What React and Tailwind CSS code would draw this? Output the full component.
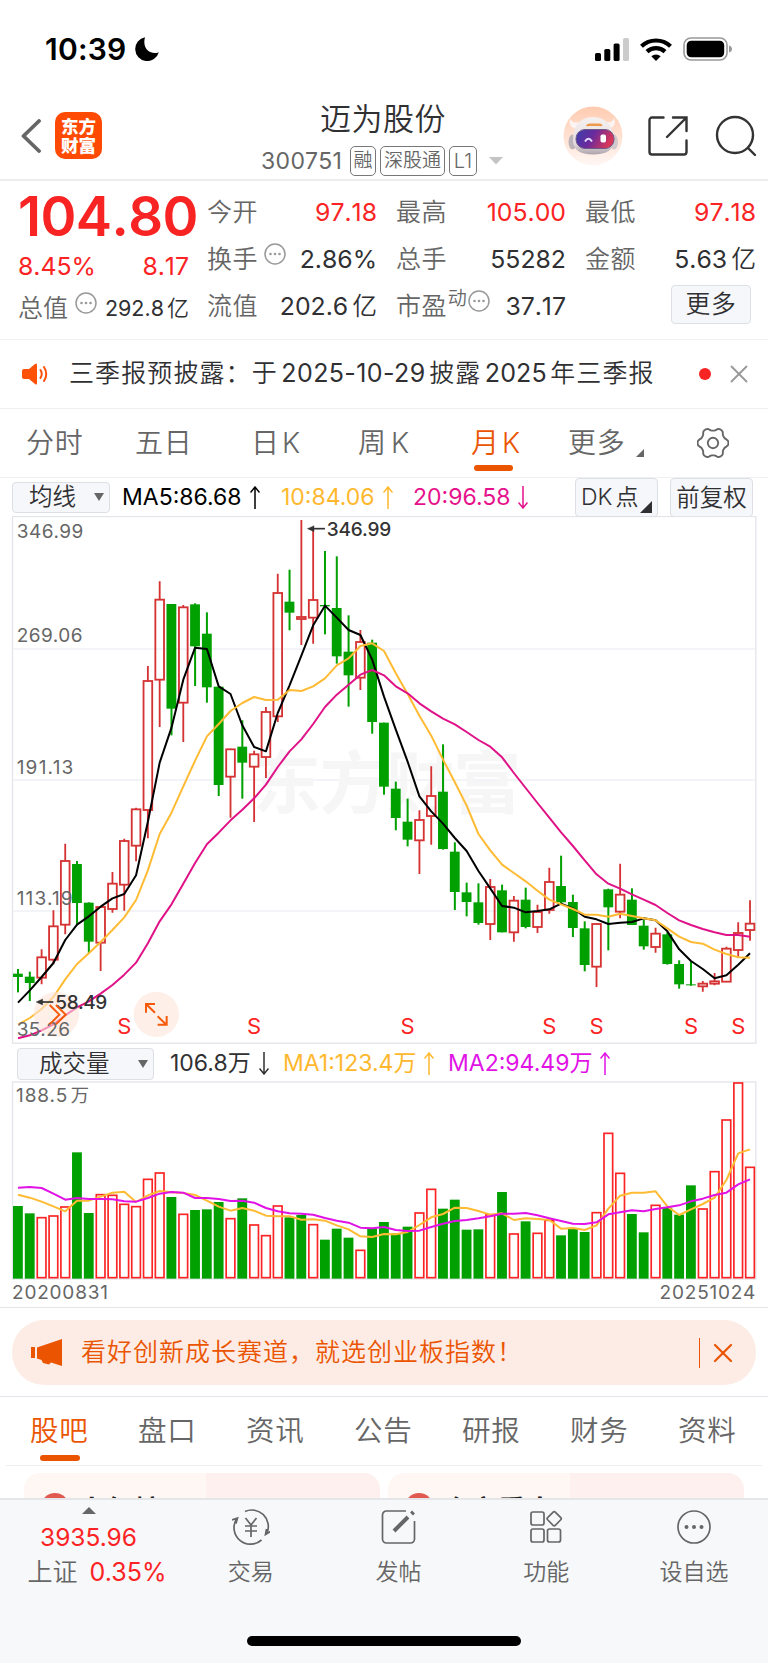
import React from 'react';
import { X } from 'lucide-react';

const STEP = 35.42;
const px = (i) => 54 + i * STEP;
const py = (y) => Math.round(y * 1.0332);

// [high, body top, body bottom, low, rising]
const CANDLES = [
  [1332, 1345, 1355, 1400, 0], [1340, 1354, 1372, 1425, 0], [1275, 1298, 1357, 1376, 1],
  [1161, 1208, 1305, 1318, 1], [968, 1018, 1203, 1231, 1], [1018, 1027, 1140, 1205, 0],
  [1138, 1139, 1252, 1286, 0], [1150, 1152, 1255, 1338, 1], [1050, 1084, 1158, 1168, 1],
  [953, 960, 1087, 1162, 1], [863, 868, 974, 1019, 1], [452, 496, 870, 952, 1],
  [206, 259, 492, 629, 1], [272, 272, 576, 653, 0], [275, 282, 558, 673, 1],
  [270, 273, 395, 510, 0], [296, 358, 514, 558, 0], [512, 512, 798, 829, 0],
  [692, 694, 773, 892, 1], [610, 686, 733, 837, 0], [698, 708, 744, 905, 1],
  [571, 586, 716, 777, 1], [184, 240, 598, 615, 1], [172, 265, 297, 348, 0],
  [28, 310, 316, 391, 1], [50, 260, 312, 387, 1], [118, 275, 279, 360, 0],
  [134, 284, 424, 445, 0], [305, 410, 479, 570, 0], [347, 382, 486, 522, 1],
  [376, 384, 615, 648, 0], [617, 617, 802, 826, 0], [788, 808, 893, 929, 0],
  [837, 904, 956, 976, 0], [871, 899, 958, 1056, 1], [743, 829, 888, 971, 1],
  [679, 817, 983, 985, 0], [964, 991, 1108, 1160, 0], [1081, 1109, 1137, 1179, 0],
  [1083, 1138, 1198, 1203, 0], [1070, 1094, 1201, 1248, 1], [1087, 1103, 1225, 1225, 0],
  [1120, 1133, 1225, 1252, 1], [1096, 1130, 1210, 1214, 0], [1145, 1166, 1210, 1227, 1],
  [1038, 1079, 1160, 1171, 1], [1003, 1091, 1138, 1141, 0], [1116, 1137, 1213, 1239, 0],
  [1193, 1214, 1320, 1339, 0], [1199, 1201, 1325, 1384, 1], [1099, 1100, 1153, 1278, 0],
  [1026, 1116, 1165, 1185, 1], [1098, 1130, 1204, 1204, 0], [1189, 1206, 1266, 1276, 0],
  [1212, 1229, 1268, 1284, 1], [1225, 1231, 1317, 1319, 0], [1307, 1317, 1376, 1389, 0],
  [1310, 1376, 1379, 1380, 0], [1367, 1374, 1382, 1398, 1], [1343, 1368, 1374, 1379, 1],
  [1267, 1273, 1369, 1370, 1], [1196, 1227, 1277, 1296, 1], [1132, 1200, 1219, 1250, 1]
];

const MA5 = [
  1430, 1394, 1355, 1314, 1248, 1203, 1179, 1151, 1127, 1114, 1060, 904, 733, 631, 492, 399, 403, 511, 533, 624, 687,
  700, 588, 508, 422, 334, 277, 312, 347, 362, 434, 541, 637, 730, 830, 874, 910, 951, 989, 1047, 1098, 1149,
  1154, 1167, 1163, 1159, 1142, 1156, 1180, 1188, 1201, 1197, 1195, 1185, 1190, 1222, 1275, 1309, 1332, 1359, 1350, 1319, 1286
];
const MA10 = [
  1493, 1474, 1448, 1413, 1362, 1317, 1286, 1253, 1219, 1182, 1131, 1045, 940, 878, 801, 727, 656, 620, 583, 559, 542,
  551, 550, 522, 525, 511, 488, 450, 430, 394, 386, 408, 473, 533, 596, 654, 724, 790, 858, 940, 987, 1029,
  1053, 1077, 1104, 1130, 1144, 1158, 1174, 1174, 1180, 1171, 1178, 1185, 1190, 1214, 1238, 1253, 1258, 1276, 1288, 1298, 1299
];
const MA20 = [
  1533, 1524, 1510, 1492, 1466, 1443, 1426, 1403, 1378, 1348, 1313, 1257, 1193, 1144, 1084, 1024, 970, 936, 900, 869, 836,
  797, 745, 700, 665, 620, 571, 535, 506, 477, 464, 479, 511, 531, 560, 584, 605, 621, 644, 667, 686, 717,
  763, 806, 850, 892, 935, 975, 1016, 1057, 1084, 1099, 1115, 1130, 1146, 1169, 1190, 1204, 1216, 1225, 1233, 1233, 1238
];

const SELL_MARKS = [9, 20, 33, 45, 49, 57, 61];

// top edge of each volume bar
const VOLUMES = [
  498, 520, 532, 527, 500, 337, 519, 463, 465, 492, 499, 417, 398, 471, 522, 510, 508, 486, 535, 475, 554,
  586, 497, 532, 525, 553, 599, 566, 593, 630, 565, 546, 580, 560, 518, 447, 506, 479, 569, 568, 523, 456,
  581, 544, 579, 540, 586, 567, 576, 517, 279, 399, 522, 577, 495, 503, 524, 436, 506, 394, 239, 128, 381
];
const VOL_MA1 = [
  464, 473, 485, 499, 514, 482, 482, 470, 458, 455, 486, 466, 453, 457, 459, 465, 482, 500, 512, 504, 512,
  527, 529, 529, 539, 538, 542, 556, 568, 589, 591, 582, 583, 576, 555, 532, 522, 503, 504, 513, 524, 520,
  540, 535, 537, 540, 566, 564, 570, 556, 506, 467, 458, 458, 454, 499, 525, 508, 492, 473, 420, 340, 328
];
const VOL_MA2 = [
  443, 441, 444, 461, 479, 474, 477, 477, 478, 484, 485, 474, 461, 456, 458, 474, 474, 477, 483, 482, 488,
  504, 514, 520, 521, 524, 534, 542, 548, 563, 565, 561, 570, 573, 572, 561, 551, 543, 540, 535, 529, 521,
  521, 519, 526, 535, 543, 551, 552, 547, 523, 517, 511, 514, 507, 502, 496, 484, 476, 465, 458, 433, 418
];

const RED_VOLUMES = new Set([
  2, 3, 4, 7, 8, 9, 10, 11, 12, 14, 18, 20, 21, 22, 25, 29, 34, 35, 40, 42, 44, 45, 49, 50, 51, 54, 58, 59, 60, 61, 62
]);

// six-lobed gear outline around (16, 16)
const GEAR = Array.from({ length: 72 }, (_, k) => {
  const a = (k * Math.PI) / 36;
  const c = Math.cos(6 * a);
  const r = 13.9 + 1.5 * c * (1.5 - 0.5 * c * c);
  return `${(16 + r * Math.cos(a)).toFixed(2)},${(16 + r * Math.sin(a)).toFixed(2)}`;
}).join(' ');

function Line({ data, color }) {
  return (
    <polyline
      points={data.map((y, i) => `${px(i)},${y}`).join(' ')}
      fill="none"
      stroke={color}
      strokeWidth="6"
      strokeLinejoin="round"
    />
  );
}

function StatusBar() {
  return (
    <div className="flex h-[98px] items-center justify-between pl-[45px] pr-9">
      <div className="flex items-center">
        <span className="w-[90px] text-[30px] font-semibold tracking-[0.2px] text-black">10:39</span>
        <svg width="24" height="24" viewBox="0 0 24 24">
          <path d="M10 .3A12 12 0 1 0 23.8 15.2C17 18.3 6.500 13 10 .3Z" fill="#000" />
        </svg>
      </div>
      <div className="flex items-center gap-[11px]">
        <svg width="34" height="23" viewBox="0 0 34 23">
          <rect x="0" y="15" width="6" height="8" rx="1.600" />
          <rect x="9.300" y="11" width="6" height="12" rx="1.600" />
          <rect x="18.600" y="5.500" width="6" height="17.500" rx="1.600" />
          <rect x="28" y="0" width="6" height="23" rx="1.600" fill="#ccc" />
        </svg>
        <svg width="32" height="23" viewBox="0 0 32 23" fill="none" stroke="#000" strokeWidth="4.200">
          <path d="M1.500 8.300a21 21 0 0 1 29 0" />
          <path d="M7 13.600a13.300 13.300 0 0 1 18 0" />
          <path d="M11.300 18.300a7 7 0 0 1 9.400 0L16 23Z" fill="#000" stroke="none" />
        </svg>
        <svg width="49" height="24" viewBox="0 0 49 24">
          <rect x="1" y="1" width="43" height="22" rx="7" fill="none" stroke="#999" strokeWidth="1.600" />
          <rect x="3.700" y="3.700" width="37.500" height="16.600" rx="4.500" />
          <path d="M46 8.500q3 1 3 3.500t-3 3.500Z" fill="#999" />
        </svg>
      </div>
    </div>
  );
}

function Robot() {
  return (
    <svg width="60" height="60" viewBox="0 0 60 60">
      <defs>
        <linearGradient id="halo" x1="0" y1="0" x2="0" y2="1">
          <stop offset="0" stopColor="#ffcbb0" />
          <stop offset="1" stopColor="#fff7f4" />
        </linearGradient>
        <linearGradient id="visor" x1="0" y1="0" x2="1" y2="0.3">
          <stop offset="0" stopColor="#3b3fae" />
          <stop offset="0.5" stopColor="#6a2a9c" />
          <stop offset="1" stopColor="#d8375a" />
        </linearGradient>
        <linearGradient id="shell" x1="0" y1="0" x2="0" y2="1">
          <stop offset="0" stopColor="#f6f1f1" />
          <stop offset="0.7" stopColor="#e4dcdf" />
          <stop offset="1" stopColor="#aea5ac" />
        </linearGradient>
      </defs>
      <circle cx="30" cy="30" r="29.500" fill="url(#halo)" />
      <path d="M12 23Q5 20 7 13Q10 18 18 16ZM46 23Q54 20 51 12Q49 18 41 16Z" fill="#fbf4f2" />
      <ellipse cx="9.500" cy="36" rx="4" ry="7.500" fill="#bdb4ba" />
      <ellipse cx="51" cy="36" rx="4" ry="7.500" fill="#d2c9cd" />
      <path d="M10 34Q10 12 30 11Q50 12 51 34Q51 48.500 30 48.500Q10 48.500 10 34Z" fill="url(#shell)" />
      <rect x="13" y="23.500" width="38" height="19" rx="9" fill="url(#visor)" stroke="#6e5a86" strokeWidth="1" />
      <path d="M23 19.500q1-2 4-2h9q3 0 3.500 1.500t-4 1H27q-4 .8-4-.5Z" fill="#ee9a4d" />
      <path d="M22 35.500q3.500-5.500 7 0" fill="none" stroke="#e6dcff" strokeWidth="2" />
      <rect x="37.500" y="28.500" width="5.500" height="8" rx="1.800" fill="#fff" />
    </svg>
  );
}

function Header() {
  return (
    <div className="flex h-[83px] items-center border-b-2 border-[#ececee] pb-[6px] pl-[21px]">
      <svg width="20" height="34" viewBox="0 0 20 34" className="shrink-0">
        <path d="M18 2 2.500 17 18 32" fill="none" stroke="#666" strokeWidth="3.800" strokeLinecap="round" strokeLinejoin="round" />
      </svg>
      <div className="ml-[14px] flex h-[47px] w-[47px] shrink-0 flex-col items-center justify-center rounded-[10px] bg-[#ff4a04] text-[17.500px] font-black leading-[19px] text-white">
        <span>东方</span>
        <span>财富</span>
      </div>
      <div className="ml-[159px] flex w-[245px] shrink-0 flex-col">
        <div className="pl-[59px] text-[31px] leading-[50px] tracking-[0.5px] text-[#303033]">迈为股份</div>
        <div className="flex items-center text-[#666]">
          <span className="w-[89px] text-[23px] font-normal leading-[34px] tracking-[0.4px]">300751</span>
          <span className="h-[30px] w-[26px] rounded-[5px] border border-[#777] text-center text-[19px] leading-[28px]">融</span>
          <span className="ml-1 h-[30px] w-[65px] rounded-[5px] border border-[#777] text-center text-[19px] leading-[28px]">深股通</span>
          <span className="ml-1 h-[30px] w-[28px] rounded-[5px] border border-[#777] text-center text-[20px] leading-[28px]">L1</span>
          <svg width="14" height="8" viewBox="0 0 14 8" className="ml-3 shrink-0">
            <path d="M0 0h14L7 7.500Z" fill="#c4c4c4" />
          </svg>
        </div>
      </div>
      <div className="ml-[57px] flex items-center">
        <Robot />
        <svg width="40" height="40" viewBox="0 0 40 40" className="ml-[25px]" fill="none" stroke="#333" strokeWidth="2.400" strokeLinecap="round">
          <path d="M15.500 1.500H4A2.500 2.500 0 0 0 1.500 4v32A2.500 2.500 0 0 0 4 38.500h32a2.500 2.500 0 0 0 2.500-2.500V24.500" />
          <path d="M25 1.500h13.500V15M38 2 19 21" />
        </svg>
        <svg width="42" height="42" viewBox="0 0 42 42" className="ml-[27px]" fill="none" stroke="#333" strokeWidth="2.400" strokeLinecap="round">
          <circle cx="20" cy="20" r="18" />
          <path d="m33 33 7 7" />
        </svg>
      </div>
    </div>
  );
}

function Dots({ className }) {
  return (
    <svg width="22" height="22" viewBox="0 0 22 22" className={className}>
      <circle cx="11" cy="11" r="10" fill="none" stroke="#999" strokeWidth="1.500" />
      <circle cx="6.500" cy="11" r="1.300" fill="#999" />
      <circle cx="11" cy="11" r="1.300" fill="#999" />
      <circle cx="15.500" cy="11" r="1.300" fill="#999" />
    </svg>
  );
}

function Cell({ label, value, unit, mark, red }) {
  return (
    <div className="flex h-[47px] items-center whitespace-nowrap">
      <span className="text-[25px] tracking-[0.4px] text-[#666]">{label}</span>
      {mark}
      <span className={red ? 'ml-auto font-normal text-[#fb2323]' : 'ml-auto font-normal'}>{value}</span>
      {unit && <span className="ml-[4px]">{unit}</span>}
    </div>
  );
}

function Quote() {
  return (
    <div className="flex h-[159px] border-b border-[#f0f0f2] pl-[18px] pr-[12px] text-[24.800px] text-[#303033] [font-kerning:none]">
      <div className="w-[189px] shrink-0">
        <div className="h-[63px] pt-[3px] text-[54.500px] font-semibold leading-[64px] tracking-[-0.6px] text-[#f82323]">104.80</div>
        <div className="flex h-[40px] items-center justify-between pr-[18px] pt-[6px] font-normal text-[#fb2323]">
          <span>8.45%</span>
          <span>8.17</span>
        </div>
        <div className="flex h-[44px] items-center pt-[5px]">
          <span className="text-[25px] text-[#666]">总值</span>
          <Dots className="mb-[12px] ml-[7px]" />
          <span className="ml-auto text-[21.500px] font-normal">292.8</span>
          <span className="ml-[3px] pr-[18px] text-[22px]">亿</span>
        </div>
      </div>
      <div className="flex w-[170px] shrink-0 flex-col pt-[8px]">
        <Cell label="今开" value="97.18" red />
        <Cell label="换手" value="2.86%" mark={<Dots className="mb-[12px] ml-[6px]" />} />
        <Cell label="流值" value="202.6" unit="亿" />
      </div>
      <div className="ml-[19px] flex w-[170px] shrink-0 flex-col pt-[8px]">
        <Cell label="最高" value="105.00" red />
        <Cell label="总手" value="55282" />
        <Cell
          label="市盈"
          value="37.17"
          mark={
            <>
              <span className="mb-[14px] ml-[1px] text-[19px] text-[#666]">动</span>
              <Dots className="mb-[12px] ml-[1px]" />
            </>
          }
        />
      </div>
      <div className="ml-[19px] flex grow flex-col pt-[8px]">
        <Cell label="最低" value="97.18" red />
        <Cell label="金额" value="5.63" unit="亿" />
        <div className="ml-auto mr-[5px] mt-[2px] flex h-[39px] w-[80px] items-center justify-center rounded border border-[#dcdfe4] bg-[#f6f7fa] tracking-[0.8px]">更多</div>
      </div>
    </div>
  );
}

function Notice() {
  return (
    <div className="flex h-[69px] items-center border-b border-[#f0f0f2] pl-[22px] pr-5 text-[#303033]">
      <svg width="26" height="22" viewBox="0 0 26 22">
        <path d="M0 8q0-2 2-2h5l6-5q2-1.500 2 1v18q0 2.500-2 1l-6-5H2q-2 0-2-2Z" fill="#ff5209" />
        <path d="M18.500 7q2.500 4 0 8M22 4q4.500 7 0 14" fill="none" stroke="#ff5209" strokeWidth="2" strokeLinecap="round" />
      </svg>
      <span className="ml-[21px] whitespace-nowrap text-[25px] tracking-[1.1px]">
        三季报预披露：于<span className="mx-[3.500px] font-normal tracking-[0.4px]">2025-10-29</span>披露
        <span className="mx-[3.500px] font-normal tracking-[0.1px]">2025</span>年三季报
      </span>
      <span className="ml-auto h-3 w-3 rounded-full bg-[#f82323]" />
      <X className="-mr-[6px] ml-[13px] text-[#999]" size={30} strokeWidth={1.5} />
    </div>
  );
}

function Periods() {
  return (
    <div className="flex h-[69px] items-center border-b border-[#f0f0f2] pl-[26px] text-[28px] text-[#666]">
      <span className="w-[109px] tracking-[0.8px]">分时</span>
      <span className="w-[116px] tracking-[0.8px]">五日</span>
      <span className="flex w-[107px] gap-[3px]">日<span>K</span></span>
      <span className="flex w-[113px] gap-[5px]">周<span>K</span></span>
      <span className="relative flex w-[97px] gap-[3px] text-[#eb5502]">
        月<span>K</span>
        <i className="absolute -bottom-[7px] left-[3px] h-[6px] w-[39px] rounded-full bg-[#eb5502]" />
      </span>
      <span className="w-[68px] tracking-[0.8px]">更多</span>
      <svg width="8" height="8" viewBox="0 0 8 8" className="mt-5">
        <path d="M8 0v8H0Z" fill="#666" />
      </svg>
      <svg width="32" height="32" viewBox="0 0 32 32" className="ml-[53px]" fill="none" stroke="#666" strokeWidth="1.900" strokeLinejoin="round">
        <polygon points={GEAR} />
        <circle cx="16" cy="16" r="5.200" />
      </svg>
    </div>
  );
}

function Arrow({ down }) {
  return (
    <svg width="10" height="23" viewBox="0 0 10 23" className={down ? 'rotate-180' : ''} fill="none" stroke="currentColor" strokeWidth="1.500">
      <path d="M5 23V1M.5 6.500 5 1l4.500 5.500" />
    </svg>
  );
}

function Select({ className, children }) {
  return (
    <div className={`flex items-center rounded border border-[#dcdfe4] bg-[#f6f7fa] text-[23.500px] font-[350] text-[#303033] ${className}`}>
      {children}
      <svg width="10" height="8" viewBox="0 0 10 8" className="ml-auto">
        <path d="M0 0h10L5 8Z" fill="#666" />
      </svg>
    </div>
  );
}

function PriceChart() {
  return (
    <>
      <div className="flex h-[38px] items-center pl-3 pr-[15px] text-[23px] font-normal">
        <Select className="h-[31px] w-[98px] pl-[16px] pr-[5px]">均线</Select>
        <span className="ml-[12px] flex w-[159px] items-center gap-2 text-black">
          <span>MA5:86.68</span>
          <Arrow />
        </span>
        <span className="flex w-[132px] items-center gap-2 text-[#ffb82e]">
          <span>10:84.06</span>
          <Arrow />
        </span>
        <span className="flex items-center gap-2 text-[#e6128c]">
          <span>20:96.58</span>
          <Arrow down />
        </span>
        <div className="relative ml-auto h-[39px] w-[83px] rounded border border-[#dcdfe4] bg-[#f6f7fa] pl-[5px] font-[350] leading-[37px] text-[#303033]">
          DK<span className="ml-[3px]">点</span>
          <svg width="12" height="12" viewBox="0 0 12 12" className="absolute bottom-[3px] right-[5px]">
            <path d="M12 0v12H0Z" fill="#303033" />
          </svg>
        </div>
        <div className="ml-3 h-[39px] w-[83px] rounded border border-[#dcdfe4] bg-[#f6f7fa] text-center text-[23.500px] font-[350] leading-[37px] text-[#303033]">前复权</div>
      </div>
      <svg width="768" height="528" viewBox="0 17 2304 1584" className="block font-normal">
        <rect x="37.500" y="18.500" width="2230" height="1580" fill="none" stroke="#e3e5ea" strokeWidth="4" />
        {[403, 783, 1163].map((y) => (
          <path key={y} d={`M38 ${py(y)}H2266`} stroke="#eef0f5" strokeWidth="5" />
        ))}
        <text x="758" y={py(863)} fontSize="205" fontWeight="700" fill="#f6f6f7" textLength="806">东方财富</text>
        {CANDLES.map(([h, t, b, l, rising], i) => {
          const x = px(i);
          const [high, top, bottom, low] = [h, t, b, l].map(py);
          return rising ? (
            <g key={i} fill="none" stroke="#d53333" strokeWidth="5.500">
              <path d={`M${x} ${high}V${top}M${x} ${bottom}V${low}`} />
              <rect x={x - 13} y={top} width="26" height={bottom - top} />
            </g>
          ) : (
            <g key={i} fill="#00a000">
              <rect x={x - 3} y={high} width="6" height={low - high} />
              <rect x={x - 15} y={top} width="29.500" height={bottom - top} />
            </g>
          );
        })}
        <Line data={MA5.map(py)} color="#000" />
        <Line data={MA10.map(py)} color="#ffbb33" />
        <Line data={MA20.map(py)} color="#e01288" />
        <g fill="#fde5d9" fillOpacity="0.6">
          <circle cx="169" cy="1512" r="68" />
          <circle cx="469" cy="1512" r="68" />
        </g>
        <g fill="#666" fontSize="57">
          <text x="50" y="83" textLength="200">346.99</text>
          <text x="50" y="396" textLength="198">269.06</text>
          <text x="50" y="790" textLength="170">191.13</text>
          <text x="50" y="1185" textLength="168">113.19</text>
          <text x="50" y="1578" textLength="160">35.26</text>
        </g>
        <g fill="#333" stroke="#333" fontSize="57" fontWeight="500">
          <path d="M940 55H975" strokeWidth="5" />
          <path d="M922 55l20-9v18Z" strokeWidth="1" />
          <text x="980" y="77" textLength="194" strokeWidth="0">346.99</text>
          <path d="M125 1475H160" strokeWidth="5" />
          <path d="M108 1475l20-9v18Z" strokeWidth="1" />
          <text x="166" y="1497" textLength="156" strokeWidth="0">58.49</text>
        </g>
        <g transform="translate(0 49)" fill="none" stroke="#f55a0a" strokeWidth="6">
          <path d="M149 1435l29 29-29 29M168 1435l29 29-29 29" />
          <path d="M465 1458l-26-25M438 1458v-26h27M473 1469l26 25M473 1494h27v-26" />
        </g>
        <g fill="#fb2323" fontSize="66" textAnchor="middle">
          {SELL_MARKS.map((i) => (
            <text key={i} x={px(i)} y="1572">S</text>
          ))}
        </g>
      </svg>
    </>
  );
}

function VolumeChart() {
  return (
    <>
      <div className="flex h-[37px] items-center pl-[17px] pt-[2px] text-[23px] font-normal">
        <Select className="h-[32px] w-[137px] pl-[21px] pr-[5px]">成交量</Select>
        <span className="ml-[16px] flex w-[113px] items-center gap-2 text-[#303033]">
          <span>106.8万</span>
          <Arrow down />
        </span>
        <span className="flex w-[165px] items-center gap-2 text-[#ffb82e]">
          <span>MA1:123.4万</span>
          <Arrow />
        </span>
        <span className="flex items-center gap-2 text-[#e012e6]">
          <span>MA2:94.49万</span>
          <Arrow />
        </span>
      </div>
      <svg width="768" height="199" viewBox="0 123 2304 597" className="block font-normal">
        <rect x="37.500" y="126" width="2230" height="591" fill="none" stroke="#e3e5ea" strokeWidth="4" />
        <text x="48" y="185" fontSize="57" fill="#666" textLength="154">188.5</text>
        <text x="212" y="185" fontSize="55" fill="#666">万</text>
        {VOLUMES.map((y, i) =>
          RED_VOLUMES.has(i) ? (
            <rect key={i} x={px(i) - 13} y={y + 1} width="26" height={712 - y} fill="#fff" stroke="#fb2323" strokeWidth="5" />
          ) : (
            <rect key={i} x={px(i) - 15} y={y} width="29.500" height={716 - y} fill="#00a000" />
          )
        )}
        <Line data={VOL_MA1} color="#ffbb33" />
        <Line data={VOL_MA2} color="#e012e6" />
      </svg>
      <div className="flex h-[28px] justify-between border-b border-[#e6e6ea] px-3 text-[19px] font-normal leading-[26px] tracking-[0.8px] text-[#666]">
        <span>20200831</span>
        <span>20251024</span>
      </div>
    </>
  );
}

function Banner() {
  return (
    <div className="border-b border-[#e4e6eb] px-3 pb-[11px] pt-3">
      <div className="flex h-[65px] items-center rounded-[32px] bg-[#fcece5] pl-[19px] pr-[21px] text-[#eb5502]">
        <svg width="31" height="27" viewBox="0 0 31 27" fill="currentColor">
          <path d="M0 8h4v11H0ZM6 8.500 31 0v27l-11-3.500-2 2-6-1.500-1.500-3L6 19.500Z" />
        </svg>
        <span className="ml-[19px] text-[25px] tracking-[1px]">看好创新成长赛道，就选创业板指数！</span>
        <span className="ml-auto h-[30px] w-[1.500px] bg-current" />
        <X className="-mr-[4px] ml-[7px]" size={32} strokeWidth={1.6} />
      </div>
    </div>
  );
}

const SECTIONS = ['股吧', '盘口', '资讯', '公告', '研报', '财务', '资料'];

function Sections() {
  return (
    <div className="mx-[6px] flex h-[69px] items-center gap-[50px] whitespace-nowrap border-b border-[#ededf0] pl-[24px] pt-[1px] text-[28.500px] tracking-[0.8px] text-[#666]">
      {SECTIONS.map((name, i) => (
        <span key={name} className={i === 0 ? 'relative w-[58px] text-[#eb5502]' : 'w-[58px]'}>
          {name}
          {i === 0 && <i className="absolute -bottom-[8px] left-[10px] h-[6px] w-[40px] rounded-full bg-[#eb5502]" />}
        </span>
      ))}
    </div>
  );
}

function Promos() {
  return (
    <div className="flex h-[32px] gap-2 overflow-hidden px-6 pt-[7px]">
      {['人气榜', '全市看盘'].map((name) => (
        <div key={name} className="flex h-[90px] w-[356px] shrink-0 items-start rounded-2xl bg-linear-to-r from-[#fef7f3] from-51% to-[#fef0ee] to-51% pl-[17px] pt-[20px]">
          <span className="h-[28px] w-[28px] rounded-full bg-[#e05a52]" />
          <span className="ml-[9px] mt-[1px] text-[28px] font-bold leading-[34px] text-[#222]">{name}</span>
        </div>
      ))}
    </div>
  );
}

function Tab({ name, children }) {
  return (
    <div className="flex w-[147.700px] flex-col items-center pt-[9px]">
      <svg width="38" height="36" viewBox="0 0 38 36" fill="none" stroke="#666" strokeWidth="1.700">
        {children}
      </svg>
      <span className="mt-[11px] leading-[32px]">{name}</span>
    </div>
  );
}

function TabBar() {
  return (
    <div className="h-[165px] border-t-2 border-[#e4e6ea] bg-[#f6f8fa] text-[23px] text-[#666]">
      <div className="flex h-[136px]">
        <div className="flex w-[177px] flex-col items-center pt-[7px]">
          <svg width="14" height="7" viewBox="0 0 14 7">
            <path d="M0 7 7 0l7 7Z" fill="#666" />
          </svg>
          <span className="mt-[4px] text-[24.500px] font-normal leading-[38px] text-[#fb2323]">3935.96</span>
          <span className="flex gap-3 pl-[17px] text-[25px] leading-[32px]">
            <span>上证</span>
            <span className="font-normal text-[#fb2323]">0.35%</span>
          </span>
        </div>
        <Tab name="交易">
          <path d="M13 2.500A16.500 16.500 0 0 1 35 24M29.500 31A16.500 16.500 0 0 1 4.500 10M0 11l5.500-2L4 14.500M38.500 22.500 33.500 25.500l1-5.500" />
          <path d="m13.500 9 5.500 7 5.500-7M19 16v12M13 17h12M13 22h12" />
        </Tab>
        <Tab name="发帖">
          <path d="M26 2H6.500A4 4 0 0 0 2.500 6v24a4 4 0 0 0 4 4h24a4 4 0 0 0 4-4V12" />
          <path d="M14 22 28 8M31.500 5l2-2" strokeWidth="4" />
        </Tab>
        <Tab name="功能">
          <rect x="4" y="3" width="13" height="13" rx="2" />
          <rect x="4" y="20" width="13" height="13" rx="2" />
          <rect x="20.500" y="20" width="13" height="13" rx="2" />
          <rect x="21.800" y="4.300" width="10.800" height="10.800" rx="1.500" transform="rotate(45 27.200 9.700)" />
        </Tab>
        <Tab name="设自选">
          <circle cx="19" cy="18" r="16" />
          <path d="M11.500 18h.01M19 18h.01M26.500 18h.01" strokeWidth="4" strokeLinecap="round" />
        </Tab>
      </div>
      <div className="mx-auto h-[10px] w-[274px] rounded-full bg-black" />
    </div>
  );
}

export default function App() {
  return (
    <div className="h-[1663px] w-[768px] overflow-hidden bg-white font-['Inter','Noto_Sans_CJK_SC',sans-serif] font-[350]">
      <StatusBar />
      <Header />
      <Quote />
      <Notice />
      <Periods />
      <PriceChart />
      <VolumeChart />
      <Banner />
      <Sections />
      <Promos />
      <TabBar />
    </div>
  );
}
